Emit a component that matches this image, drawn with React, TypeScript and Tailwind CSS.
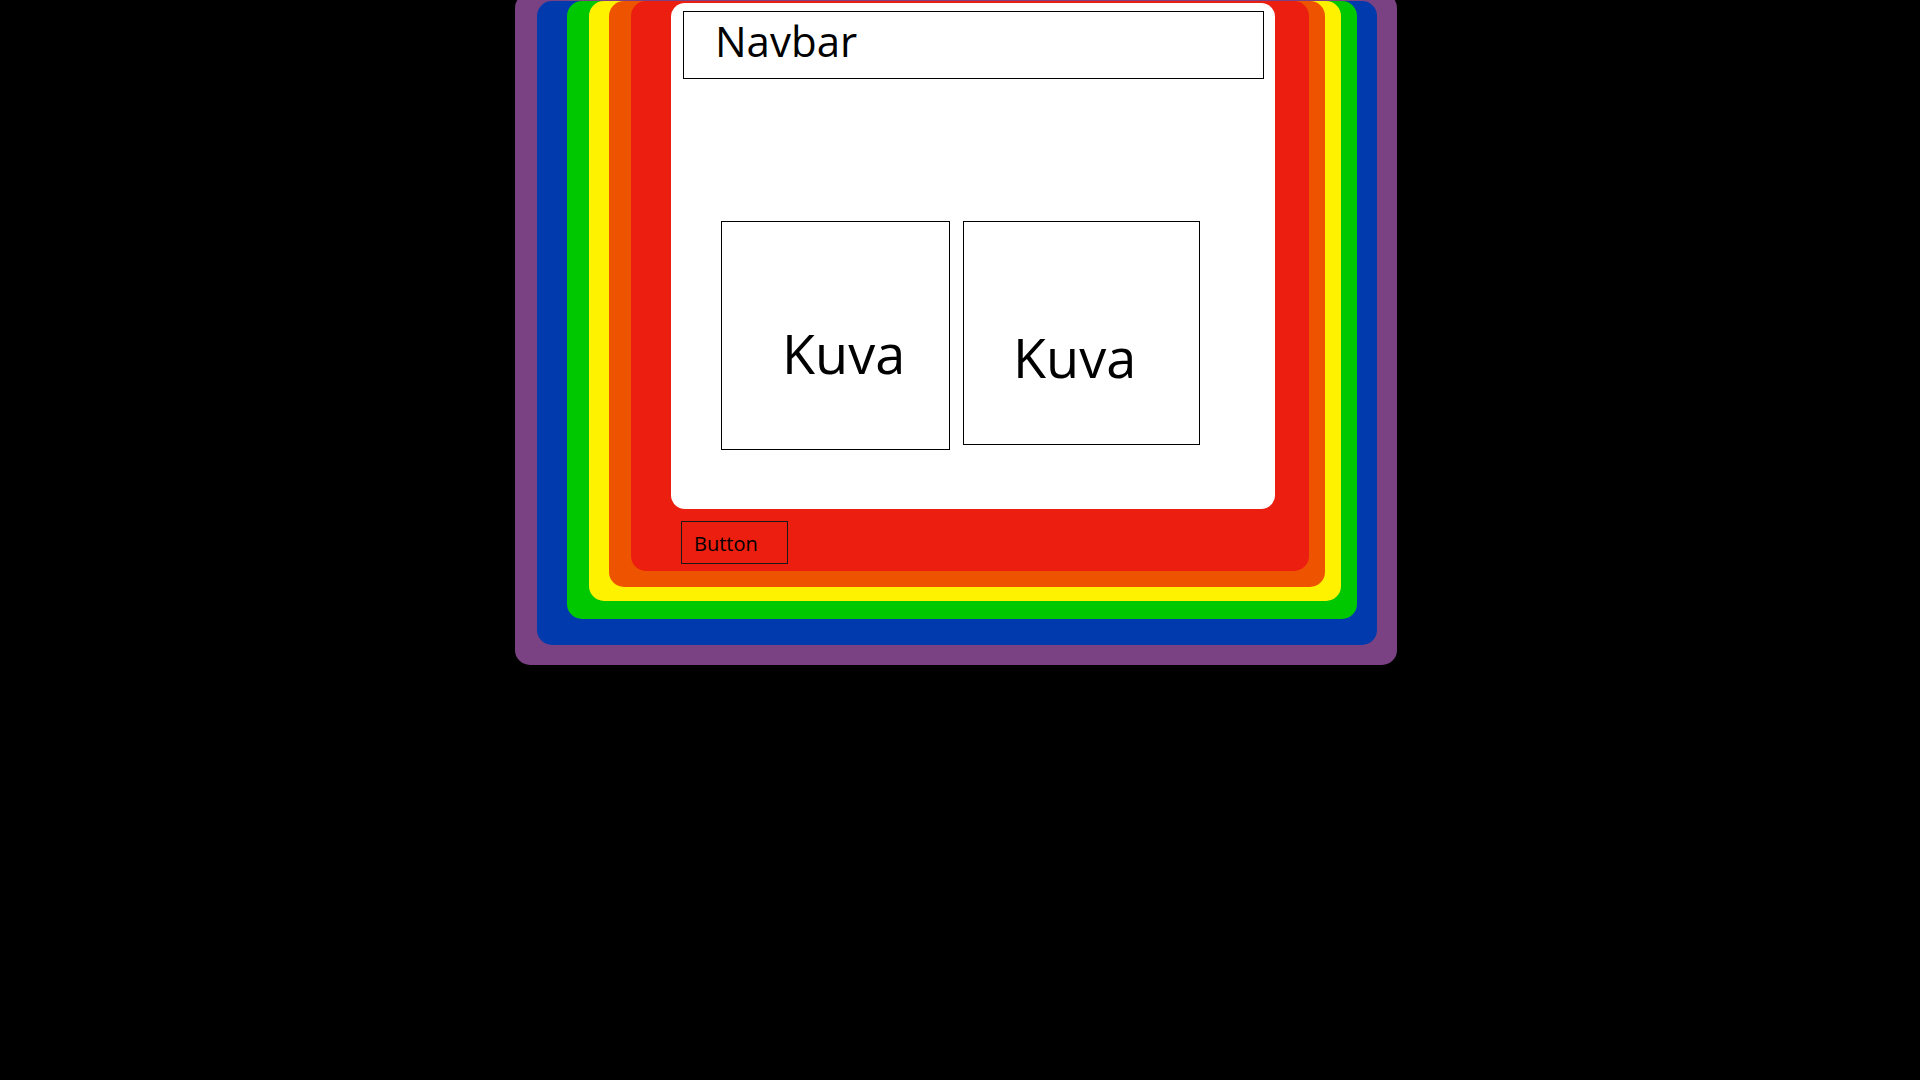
import React from 'react';

const font = { fontFamily: '"Open Sans", "Noto Sans", sans-serif' };

export default function App() {
  return (
    <div className="min-h-screen bg-black flex flex-col items-start overflow-hidden" style={font}>
      {/* purple */}
      <div className="mt-[-7px] ml-[515px] w-[882px] pt-[9px] pb-[20px] pl-[22px] pr-[20px] rounded-[15px] bg-[#7a4283]">
        {/* blue */}
        <div className="pl-[30px] pr-[20px] pb-[26px] rounded-[15px] bg-[#003aad]">
          {/* green */}
          <div className="mt-[-1px] pl-[22px] pr-[16px] pb-[18px] rounded-[15px] bg-[#00c800]">
            {/* yellow */}
            <div className="mt-[-1px] pl-[20px] pr-[16px] pb-[14px] rounded-[15px] bg-[#fff200]">
              {/* orange */}
              <div className="mt-[-1px] pl-[22px] pr-[16px] pb-[16px] rounded-[15px] bg-[#ee5400]">
                {/* red */}
                <div className="pt-[2px] pl-[40px] pr-[34px] pb-[7px] rounded-[15px] bg-[#eb1e10]">
                  <div className="h-[506px] bg-white rounded-[14px] flex flex-col items-start">
                    <div className="mt-[8px] ml-[12px] w-[581px] h-[68px] border border-black pl-[31px] pt-[8px]">
                      <span className="block text-[42px] leading-none text-black">Navbar</span>
                    </div>
                    <div className="mt-[142px] ml-[50px] flex items-start gap-[13px]">
                      <div className="w-[229px] h-[229px] border border-black pl-[60px] pt-[104px]">
                        <span className="block text-[54px] leading-none text-black">Kuva</span>
                      </div>
                      <div className="w-[237px] h-[224px] border border-black pl-[49px] pt-[108px]">
                        <span className="block text-[54px] leading-none text-black">Kuva</span>
                      </div>
                    </div>
                  </div>
                  <button className="mt-[12px] ml-[10px] w-[107px] h-[43px] border border-[#1a1a1a] bg-[#eb1e10] pl-[12px] pt-[12px] flex items-start text-left">
                    <span className="block text-[20px] leading-none text-black">Button</span>
                  </button>
                </div>
              </div>
            </div>
          </div>
        </div>
      </div>
    </div>
  );
}
